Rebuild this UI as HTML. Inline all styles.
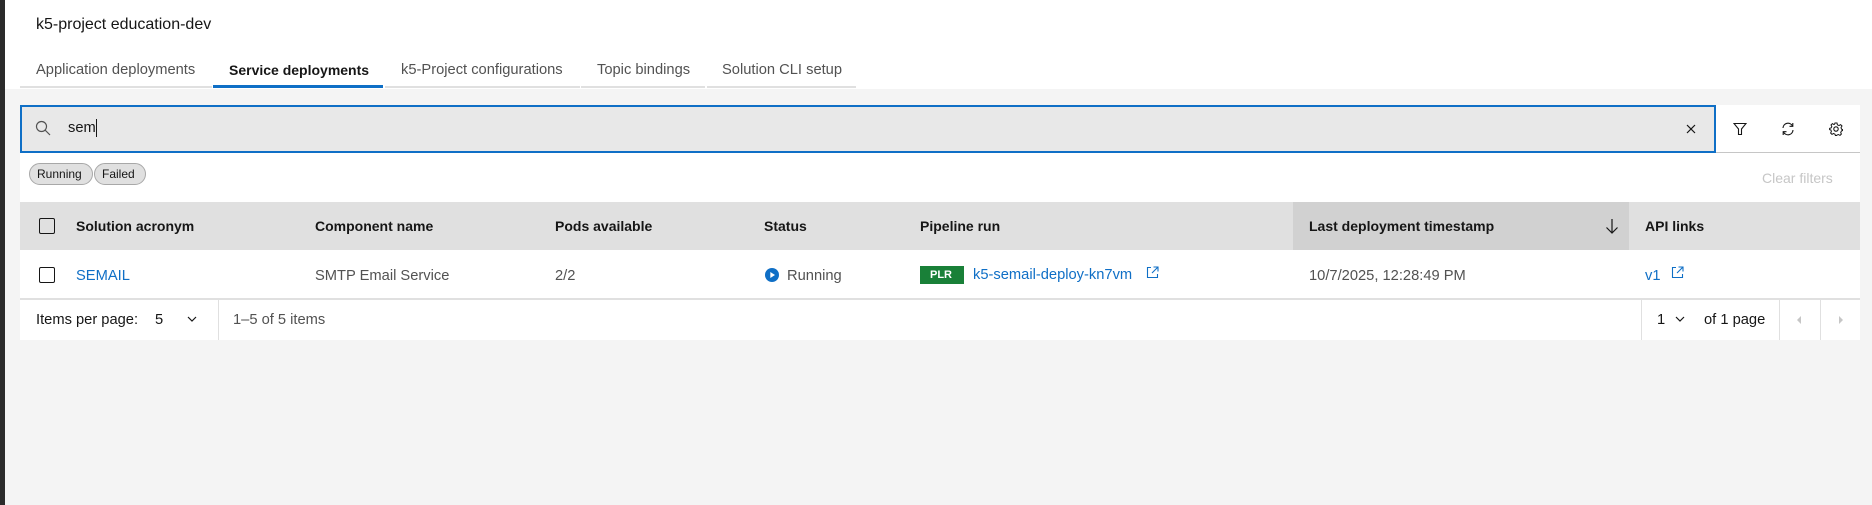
<!DOCTYPE html>
<html><head><meta charset="utf-8"><style>
*{box-sizing:border-box;margin:0;padding:0}
body{width:1872px;height:505px;background:#f4f4f4;font-family:"Liberation Sans",sans-serif;color:#161616;position:relative;overflow:hidden;font-size:14.7px}
.a{position:absolute}
.t{position:absolute;white-space:nowrap;line-height:1}
.b{font-weight:bold;font-size:14px}
</style></head><body>
<div class="a" style="left:0;top:0;width:5px;height:505px;background:#2b2b2b"></div>
<div class="a" style="left:5px;top:0;width:1867px;height:89px;background:#fff"></div>
<div class="t" style="left:36px;top:17px;font-size:16px;color:#161616">k5-project education-dev</div>
<div class="a" style="left:20px;top:86px;width:192px;height:2px;background:#e0e0e0"></div>
<div class="a" style="left:213px;top:85px;width:170px;height:3px;background:#0f6fc6"></div>
<div class="a" style="left:385px;top:86px;width:195px;height:2px;background:#e0e0e0"></div>
<div class="a" style="left:581px;top:86px;width:124px;height:2px;background:#e0e0e0"></div>
<div class="a" style="left:707px;top:86px;width:149px;height:2px;background:#e0e0e0"></div>
<div class="t" style="left:36px;top:63px;color:#525252">Application deployments</div>
<div class="t b" style="left:229px;top:63px">Service deployments</div>
<div class="t" style="left:401px;top:63px;color:#525252">k5-Project configurations</div>
<div class="t" style="left:597px;top:63px;color:#525252">Topic bindings</div>
<div class="t" style="left:722px;top:63px;color:#525252">Solution CLI setup</div>
<div class="a" style="left:20px;top:105px;width:1696px;height:48px;background:#e8e8e8;border:2px solid #0f6fc6"></div>
<svg class="a" style="left:35px;top:120px" width="16" height="16" viewBox="0 0 16 16"><circle cx="6.5" cy="6.5" r="5" fill="none" stroke="#525252" stroke-width="1.2"/><line x1="10" y1="10" x2="15" y2="15" stroke="#525252" stroke-width="1.2"/></svg>
<div class="t" style="left:68px;top:121px">sem</div>
<div class="a" style="left:96px;top:119px;width:1px;height:18px;background:#161616"></div>
<svg class="a" style="left:1686px;top:124px" width="10" height="10" viewBox="0 0 10 10"><path d="M1 1L9 9M9 1L1 9" stroke="#161616" stroke-width="1.2"/></svg>
<div class="a" style="left:1716px;top:105px;width:144px;height:48px;background:#fff;border-bottom:1px solid #c6c6c6"></div>
<svg class="a" style="left:1733px;top:122px" width="14" height="14" viewBox="0 0 14 14"><path d="M1 1.5H13L8.5 7V12.5H5.5V7Z" fill="none" stroke="#161616" stroke-width="1.1"/></svg>
<svg class="a" style="left:1781px;top:122px" width="14" height="14" viewBox="0 0 14 14"><path d="M2 6A5 5 0 0 1 11.5 4M12 8A5 5 0 0 1 2.5 10" fill="none" stroke="#161616" stroke-width="1.1"/><path d="M11.8 1V4.3H8.5M2.2 13V9.7H5.5" fill="none" stroke="#161616" stroke-width="1.1"/></svg>
<svg class="a" style="left:1829px;top:122px" width="14" height="14" viewBox="0 0 14 14"><circle cx="7" cy="7" r="2.2" fill="none" stroke="#161616" stroke-width="1.1"/><path d="M6 1H8L8.4 2.8L10 3.6L11.6 2.6L13 4L12 5.7L12.6 7.2L13.5 7.5V8.5L12.4 9L11.7 10.6L12.4 12L11 13.4L9.4 12.5L8 13.1L7.6 13.5H6.4L6 12.2L4.5 11.5L3 12.4L1.6 11L2.4 9.5L1.9 8L0.6 7.6V6.4L2.2 5.9L2.8 4.5L2 3L3.4 1.6L4.9 2.5L5.6 2.1Z" fill="none" stroke="#161616" stroke-width="1"/></svg>
<div class="a" style="left:20px;top:153px;width:1840px;height:187px;background:#fff"></div>
<div class="a" style="left:29px;top:163px;width:64px;height:22px;background:#e0e0e0;border:1px solid #a8a8a8;border-radius:11px"></div>
<div class="t" style="left:37px;top:168px;font-size:12px">Running</div>
<div class="a" style="left:94px;top:163px;width:52px;height:22px;background:#e0e0e0;border:1px solid #a8a8a8;border-radius:11px"></div>
<div class="t" style="left:102px;top:168px;font-size:12px">Failed</div>
<div class="t" style="left:1762px;top:171px;color:#c6c6c6;font-size:14px">Clear filters</div>
<div class="a" style="left:20px;top:202px;width:1840px;height:48px;background:#e0e0e0"></div>
<div class="a" style="left:1293px;top:202px;width:336px;height:48px;background:#d1d1d1"></div>
<div class="a" style="left:39px;top:218px;width:16px;height:16px;border:1px solid #161616;border-radius:2px"></div>
<div class="t b" style="left:76px;top:219px">Solution acronym</div>
<div class="t b" style="left:315px;top:219px">Component name</div>
<div class="t b" style="left:555px;top:219px">Pods available</div>
<div class="t b" style="left:764px;top:219px">Status</div>
<div class="t b" style="left:920px;top:219px">Pipeline run</div>
<div class="t b" style="left:1309px;top:219px">Last deployment timestamp</div>
<svg class="a" style="left:1605px;top:218px" width="14" height="16" viewBox="0 0 14 16"><path d="M7 1V15M1.5 9.5L7 15L12.5 9.5" fill="none" stroke="#161616" stroke-width="1.2"/></svg>
<div class="t b" style="left:1645px;top:219px">API links</div>
<div class="a" style="left:39px;top:267px;width:16px;height:16px;border:1px solid #161616;border-radius:2px"></div>
<div class="t" style="left:76px;top:269px;color:#0f6fc6">SEMAIL</div>
<div class="t" style="left:315px;top:269px;color:#525252">SMTP Email Service</div>
<div class="t" style="left:555px;top:269px;color:#525252">2/2</div>
<svg class="a" style="left:765px;top:268px" width="14" height="14" viewBox="0 0 14 14"><circle cx="7" cy="7" r="7" fill="#0f6fc6"/><path d="M5.3 4V10L10 7Z" fill="#fff"/></svg>
<div class="t" style="left:787px;top:269px;color:#525252">Running</div>
<div class="a" style="left:920px;top:266px;width:44px;height:18px;background:#198038"></div>
<div class="t" style="left:930px;top:270px;font-size:11px;font-weight:bold;color:#fff">PLR</div>
<div class="t" style="left:973px;top:268px;color:#0f6fc6">k5-semail-deploy-kn7vm</div>
<svg class="a" style="left:1146px;top:266px" width="13" height="13" viewBox="0 0 13 13"><path d="M5 1.5H1.5V11.5H11.5V8M7.5 1H12V5.5M12 1L6 7" fill="none" stroke="#0f6fc6" stroke-width="1.1"/></svg>
<div class="t" style="left:1309px;top:269px;color:#525252">10/7/2025, 12:28:49 PM</div>
<div class="t" style="left:1645px;top:269px;color:#0f6fc6">v1</div>
<svg class="a" style="left:1671px;top:266px" width="13" height="13" viewBox="0 0 13 13"><path d="M5 1.5H1.5V11.5H11.5V8M7.5 1H12V5.5M12 1L6 7" fill="none" stroke="#0f6fc6" stroke-width="1.1"/></svg>
<div class="a" style="left:20px;top:298px;width:1840px;height:2px;background:#e0e0e0"></div>
<div class="t" style="left:36px;top:313px">Items per page:</div>
<div class="t" style="left:155px;top:313px">5</div>
<svg class="a" style="left:187px;top:316px" width="10" height="7" viewBox="0 0 10 7"><path d="M1 1L5 5L9 1" fill="none" stroke="#161616" stroke-width="1.2"/></svg>
<div class="a" style="left:218px;top:300px;width:1px;height:40px;background:#e0e0e0"></div>
<div class="t" style="left:233px;top:313px;color:#525252">1–5 of 5 items</div>
<div class="a" style="left:1641px;top:300px;width:1px;height:40px;background:#e0e0e0"></div>
<div class="t" style="left:1657px;top:313px">1</div>
<svg class="a" style="left:1675px;top:316px" width="10" height="7" viewBox="0 0 10 7"><path d="M1 1L5 5L9 1" fill="none" stroke="#161616" stroke-width="1.2"/></svg>
<div class="t" style="left:1704px;top:313px">of 1 page</div>
<div class="a" style="left:1779px;top:300px;width:1px;height:40px;background:#e0e0e0"></div>
<div class="a" style="left:1820px;top:300px;width:1px;height:40px;background:#e0e0e0"></div>
<svg class="a" style="left:1796px;top:316px" width="6" height="8" viewBox="0 0 6 8"><path d="M5 0V8L1 4Z" fill="#c6c6c6"/></svg>
<svg class="a" style="left:1838px;top:316px" width="6" height="8" viewBox="0 0 6 8"><path d="M1 0V8L5 4Z" fill="#c6c6c6"/></svg>
</body></html>
